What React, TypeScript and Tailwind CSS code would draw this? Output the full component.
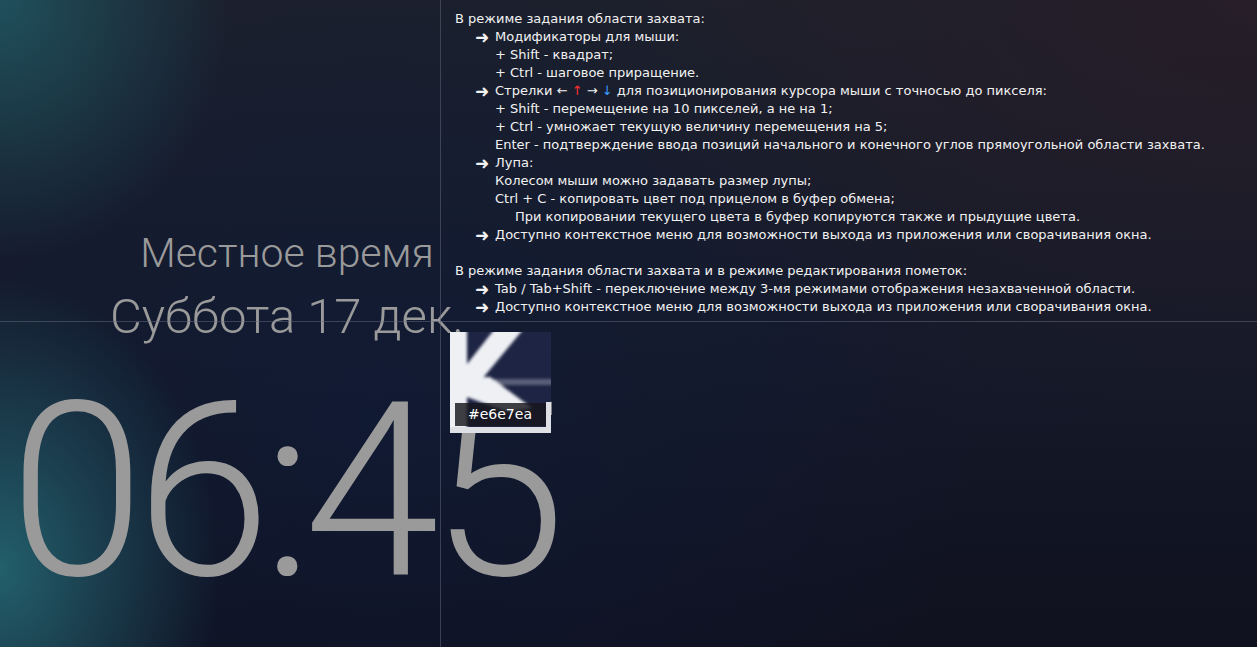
import React from "react";

const helpFont = "font-['DejaVu_Sans',sans-serif]";

function Arrow() {
  return <span className="inline-block w-[20px] text-[17px] leading-[18px] align-top">➜</span>;
}

function Line({ indent, children }: { indent: number; children?: React.ReactNode }) {
  const pad = indent === 0 ? "pl-0" : indent === 1 ? "pl-[20px]" : indent === 2 ? "pl-[40px]" : "pl-[60px]";
  return <div className={`h-[18px] leading-[18px] whitespace-nowrap ${pad}`}>{children}</div>;
}

function HelpPanel() {
  return (
    <div className={`absolute left-[455px] top-[10px] text-[13px] text-[#f2f2f2] ${helpFont}`}>
      <Line indent={0}>В режиме задания области захвата:</Line>
      <Line indent={1}><Arrow />Модификаторы для мыши:</Line>
      <Line indent={2}>+ Shift - квадрат;</Line>
      <Line indent={2}>+ Ctrl - шаговое приращение.</Line>
      <Line indent={1}>
        <Arrow />Стрелки ← <span className="text-[#ff3030]">↑</span> → <span className="text-[#3c9cff]">↓</span> для позиционирования курсора мыши с точносью до пикселя:
      </Line>
      <Line indent={2}>+ Shift - перемещение на 10 пикселей, а не на 1;</Line>
      <Line indent={2}>+ Ctrl - умножает текущую величину перемещения на 5;</Line>
      <Line indent={2}>Enter - подтверждение ввода позиций начального и конечного углов прямоугольной области захвата.</Line>
      <Line indent={1}><Arrow />Лупа:</Line>
      <Line indent={2}>Колесом мыши можно задавать размер лупы;</Line>
      <Line indent={2}>Ctrl + C - копировать цвет под прицелом в буфер обмена;</Line>
      <Line indent={3}>При копировании текущего цвета в буфер копируются также и прыдущие цвета.</Line>
      <Line indent={1}><Arrow />Доступно контекстное меню для возможности выхода из приложения или сворачивания окна.</Line>
      <Line indent={0}></Line>
      <Line indent={0}>В режиме задания области захвата и в режиме редактирования пометок:</Line>
      <Line indent={1}><Arrow />Tab / Tab+Shift - переключение между 3-мя режимами отображения незахваченной области.</Line>
      <Line indent={1}><Arrow />Доступно контекстное меню для возможности выхода из приложения или сворачивания окна.</Line>
    </div>
  );
}

function ClockWidget() {
  return (
    <div className="absolute left-0 top-[233px] w-[574px] flex flex-col items-center text-[#9a9a9a] font-['Roboto',sans-serif] font-light">
      <div className="text-[41px] leading-none whitespace-nowrap">Местное время</div>
      <div className="mt-[18px] text-[49px] leading-none whitespace-nowrap">Суббота 17 дек.</div>
      <div className="mt-[29px] pr-[8px] text-[244px] leading-none tracking-[-9px] whitespace-nowrap">06:45</div>
    </div>
  );
}

function Magnifier() {
  return (
    <div className="absolute left-[450px] top-[332px] w-[101px] h-[101px]">
      <svg width="101" height="101" viewBox="0 0 101 101" className="block">
        <defs>
          <filter id="mblur" x="-20%" y="-20%" width="140%" height="140%">
            <feGaussianBlur stdDeviation="1.6" />
          </filter>
        </defs>
        <rect width="101" height="101" fill="#1e2544" />
        <g filter="url(#mblur)">
          <rect x="44" y="47" width="62" height="6" fill="#5a6078" />
          <rect x="-6" y="-6" width="23" height="113" fill="#eef0f4" />
          <polygon points="14,36 47,-6 76,-6 28,52 14,60" fill="#eef0f4" />
          <polygon points="14,46 40,45 82,76 58,80 14,64" fill="#eef0f4" />
        </g>
        <rect x="96" y="70" width="5" height="31" fill="#dfe0e5" />
        <rect x="0" y="95" width="101" height="6" fill="#dfe0e5" />
      </svg>
      <div className="absolute left-[5px] top-[71px] w-[91px] h-[23px] bg-[rgba(22,22,28,0.82)] pl-[13px] text-[14px] leading-[23px] text-white font-['DejaVu_Sans',sans-serif]">
        #e6e7ea
      </div>
    </div>
  );
}

export default function App() {
  return (
    <div className="relative w-[1257px] h-[647px] overflow-hidden bg-[#141a2a] bg-[image:radial-gradient(220px_290px_at_0%_88%,rgba(38,108,120,0.85),rgba(38,108,120,0)),radial-gradient(230px_260px_at_0%_0%,rgba(32,92,104,0.8),rgba(32,92,104,0)),radial-gradient(700px_450px_at_100%_0%,rgba(42,28,38,0.7),rgba(42,28,38,0)),radial-gradient(600px_500px_at_30%_65%,rgba(14,28,60,0.55),rgba(14,28,60,0)),linear-gradient(180deg,#1c202c_0%,#151a2a_50%,#10111f_100%)]">
      <ClockWidget />
      <HelpPanel />
      <div className="absolute left-0 top-[321px] w-full h-px bg-[rgba(100,105,125,0.5)]" />
      <div className="absolute left-[440px] top-0 w-px h-full bg-[rgba(100,105,125,0.5)]" />
      <Magnifier />
    </div>
  );
}
